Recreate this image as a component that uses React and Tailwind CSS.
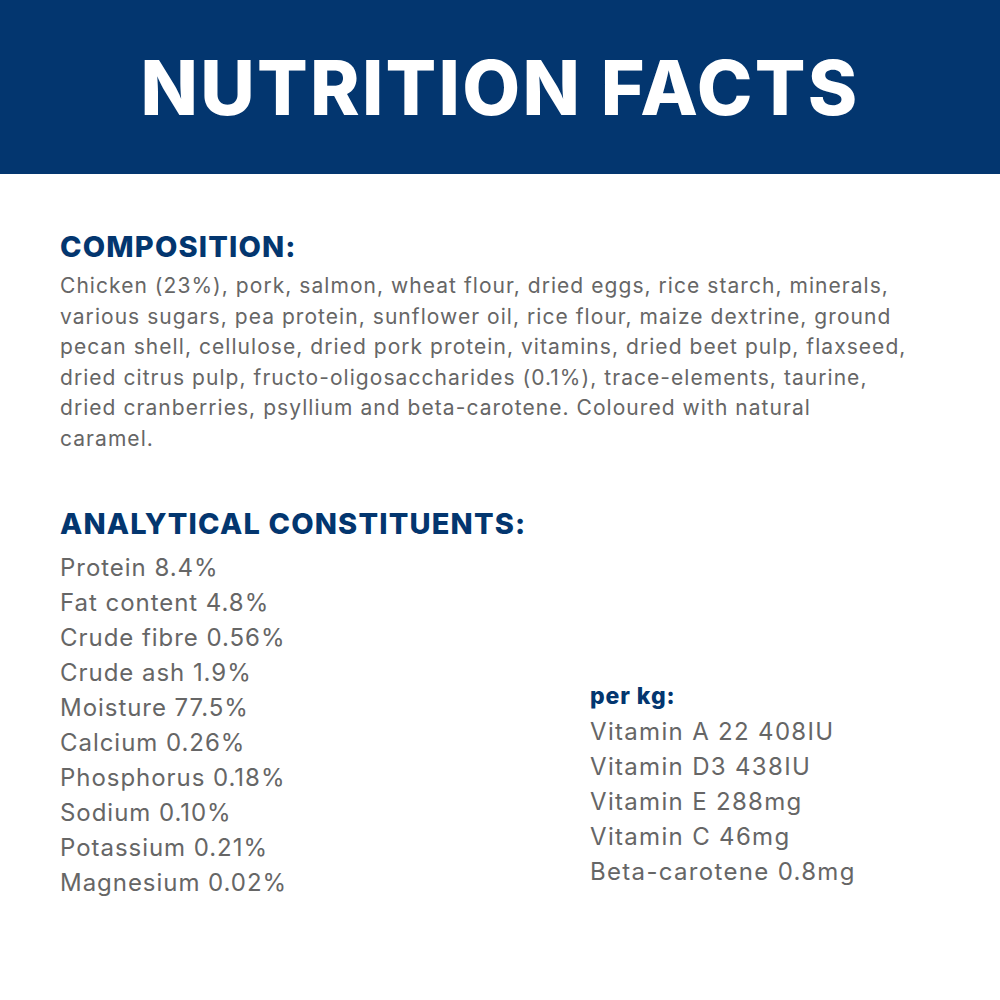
import React from 'react';

const composition = [
  'Chicken (23%), pork, salmon, wheat flour, dried eggs, rice starch, minerals,',
  'various sugars, pea protein, sunflower oil, rice flour, maize dextrine, ground',
  'pecan shell, cellulose, dried pork protein, vitamins, dried beet pulp, flaxseed,',
  'dried citrus pulp, fructo-oligosaccharides (0.1%), trace-elements, taurine,',
  'dried cranberries, psyllium and beta-carotene. Coloured with natural',
  'caramel.',
];

const analytical = [
  'Protein 8.4%',
  'Fat content 4.8%',
  'Crude fibre 0.56%',
  'Crude ash 1.9%',
  'Moisture 77.5%',
  'Calcium 0.26%',
  'Phosphorus 0.18%',
  'Sodium 0.10%',
  'Potassium 0.21%',
  'Magnesium 0.02%',
];

const perKg = [
  'Vitamin A 22 408IU',
  'Vitamin D3 438IU',
  'Vitamin E 288mg',
  'Vitamin C 46mg',
  'Beta-carotene 0.8mg',
];

export default function App() {
  return (
    <div className="w-[1000px] h-[1000px] bg-white font-['Inter',sans-serif]">
      {/* Header band */}
      <div className="h-[174px] bg-[#03366f] flex items-center justify-center">
        <h1 className="text-white text-[75px] font-extrabold tracking-[0.03em] leading-none">
          NUTRITION FACTS
        </h1>
      </div>

      <div className="px-[60px] pt-[58px]">
        <h2 className="text-[#03366f] text-[29px] font-extrabold leading-none tracking-[0.04em]">
          COMPOSITION:
        </h2>
        <p className="mt-[10px] text-[#666666] text-[21px] leading-[30.5px] tracking-[0.05em] whitespace-nowrap">
          {composition.map((line, i) => (
            <span key={i} className="block">{line}</span>
          ))}
        </p>

        <h2 className="mt-[55px] text-[#03366f] text-[29px] font-extrabold leading-none tracking-[0.04em]">
          ANALYTICAL CONSTITUENTS:
        </h2>

        <div className="mt-[12px] flex">
          <ul className="w-[530px] text-[#666666] text-[24px] leading-[35px] tracking-[0.04em]">
            {analytical.map((t) => (
              <li key={t}>{t}</li>
            ))}
          </ul>
          <div className="pt-[129px] text-[24px] leading-[35px] tracking-[0.055em]">
            <div className="text-[#03366f] font-extrabold text-[23px] tracking-[0.04em]">per kg:</div>
            <ul className="text-[#666666]">
              {perKg.map((t) => (
                <li key={t}>{t}</li>
              ))}
            </ul>
          </div>
        </div>
      </div>
    </div>
  );
}
